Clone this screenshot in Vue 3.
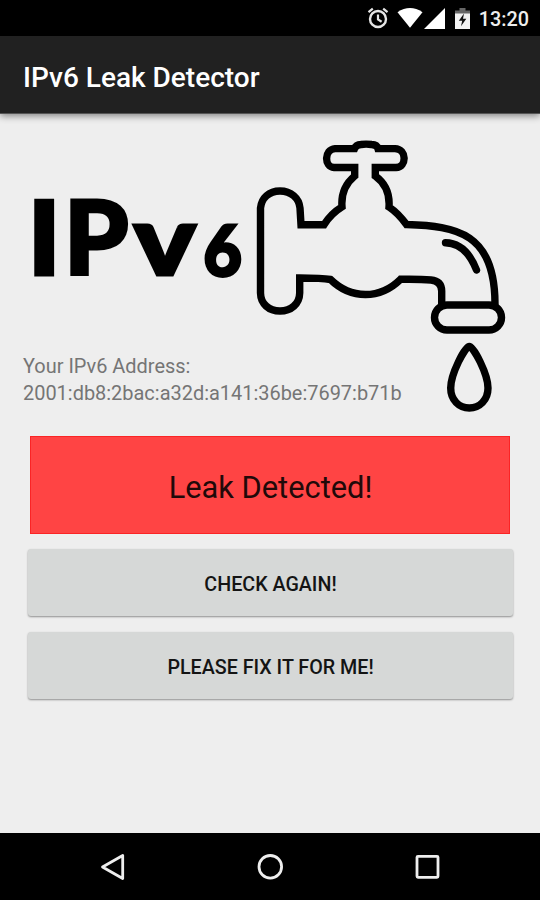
<script setup>
import { ref } from 'vue'

const time = ref('13:20')
const address = ref('2001:db8:2bac:a32d:a141:36be:7697:b71b')
const leak = ref(true)
</script>

<template>
  <div class="screen">
    <div class="status-bar">
      <svg class="alarm" viewBox="0 0 22 22" width="22" height="22">
        <circle cx="11" cy="12" r="8" fill="none" stroke="#e6e6e6" stroke-width="2.4" />
        <path d="M11 7.5v5l3.6 2.3M1.5 5.2l4.3-3.5M20.5 5.2l-4.3-3.5" fill="none" stroke="#e6e6e6" stroke-width="2.2" />
      </svg>
      <svg class="wifi" viewBox="0 0 26 20" width="26" height="20">
        <path d="M0.5 4.2Q13-4 25.5 4.2L13 19.7z" fill="#fff" />
      </svg>
      <svg class="signal" viewBox="0 0 21 21" width="21" height="21">
        <path d="M0 21L21 0V21z" fill="#fff" />
      </svg>
      <svg class="battery" viewBox="0 0 15 21" width="15" height="21">
        <path d="M4.5 0h6v2.5H15V6H0V2.5h4.5z" fill="#666" />
        <path d="M0 5.5h15V21H0z" fill="#f2f2f2" />
        <path d="M9 5.5L3.8 12.8h3.4L6 18.2l5.3-7.4H8z" fill="#111" />
      </svg>
      <span class="time">{{ time }}</span>
    </div>

    <header>
      <h1>IPv6 Leak Detector</h1>
    </header>

    <main>
      <div class="hero">
        <svg class="logo" viewBox="0 114 540 306" width="540" height="306">
          <g class="logo-text">
            <text transform="translate(27.5 275.3) scale(1.07 1)" font-size="103">I</text>
            <text transform="translate(64 275.3)" font-size="103">P</text>
            <text transform="translate(133.7 275) scale(1.19 1)" font-size="98">v</text>
            <text transform="translate(203.5 276) scale(0.93 1)" font-size="71">6</text>
          </g>
          <g class="tap">
            <!-- body, handle and flange -->
            <path
              d="M441.7 304V291Q441.5 281 431 280Q420 279 400.5 279.3C380 299.5 351 299.5 330.5 279.5Q322 278 299.7 278V293C299.5 304 291 311 280 311S260.7 304 260.5 293V208C261.5 198 269 191 280 191S299 198 300 208L301 224.7H324Q331 213.5 342 206.8C341 194 345 184 354.7 176V167.5H334C324 167 324 149.5 335 148.6H354.5Q356 144.7 361 144.5Q366 143.7 371.5 144.5Q377 144.7 378 148.6H395C407 149 407 167 396 167.5H375.3V176C385 183 390 193 389 207Q398 213 406.5 224.5C457 226 495 233 495 304"
            />
            <rect x="434.5" y="305" width="67" height="25" rx="12.5" />
            <!-- highlight -->
            <path d="M445.5 242.7Q466 243 476.5 270" />
            <!-- drop -->
            <path d="M469.3 346.5C465 346.5 450.7 374 450.7 388C450.7 400 459 408 469.3 408S488 400 488 388C488 374 473.5 346.5 469.3 346.5z" />
          </g>
        </svg>
        <p class="address">Your IPv6 Address:<br />{{ address }}</p>
      </div>

      <div v-if="leak" class="result">Leak Detected!</div>

      <button class="check">CHECK AGAIN!</button>
      <button class="fix">PLEASE FIX IT FOR ME!</button>
    </main>

    <nav>
      <svg viewBox="0 0 30 30" width="30" height="30">
        <path d="M4.5 15L24.7 3.5V26.5z" />
      </svg>
      <svg viewBox="0 0 30 30" width="30" height="30">
        <circle cx="15.3" cy="14.8" r="11.3" />
      </svg>
      <svg viewBox="0 0 30 30" width="30" height="30">
        <rect x="5" y="4.3" width="21" height="21" rx="1" />
      </svg>
    </nav>
  </div>
</template>

<style>
body {
  background: #eee;
}
</style>

<style scoped>
.screen {
  display: flex;
  flex-direction: column;
  width: 540px;
  height: 900px;
  background: #eee;
  font-family: Roboto, sans-serif;
  overflow: hidden;
}

.status-bar {
  display: flex;
  justify-content: flex-end;
  align-items: center;
  height: 36px;
  padding-right: 11px;
  background: #000;
}

.wifi {
  margin-left: 8px;
}

.signal {
  margin-left: 1px;
}

.battery {
  margin-left: 10px;
}

.time {
  margin-left: 9px;
  padding-top: 3px;
  color: #eee;
  font-size: 19.8px;
  font-weight: 500;
  line-height: 36px;
}

header {
  display: flex;
  align-items: center;
  box-sizing: border-box;
  height: 78px;
  padding: 5px 0 0 23px;
  background: #212121;
  border-bottom: 1px solid #555;
  box-shadow: 0 2px 7px rgba(0, 0, 0, 0.45);
  z-index: 1;
}

h1 {
  margin: 0;
  color: #fff;
  font-size: 28px;
  font-weight: 500;
}

main {
  flex: 1;
  display: flex;
  flex-direction: column;
}

/* the drop hangs down beside the address, so both share one cell */
.hero {
  display: grid;
  height: 322px;
}

.logo,
.address {
  grid-area: 1 / 1;
}

.logo-text {
  fill: #000;
  stroke: #000;
  stroke-width: 3;
  font-family: Lato, sans-serif;
  font-weight: 900;
}

.tap {
  fill: none;
  stroke: #000;
  stroke-width: 7.4;
  stroke-linecap: round;
}

.address {
  align-self: end;
  margin: 0 0 29px 23px;
  color: #757575;
  font-size: 19.95px;
  line-height: 27px;
}

.result {
  display: flex;
  justify-content: center;
  align-items: center;
  box-sizing: border-box;
  height: 98px;
  margin: 0 30px;
  padding: 4px 0 0 1px;
  border: 1px solid #fb2425;
  background: #ff4444;
  color: #210909;
  font-size: 30.8px;
}

button {
  height: 67px;
  margin: 0 27px 0 28px;
  padding: 3px 0 0;
  border: none;
  border-radius: 3px;
  background: #d6d8d7;
  box-shadow: 0 1px 2px rgba(0, 0, 0, 0.4);
  color: #141414;
  font-family: Roboto, sans-serif;
  font-size: 19.7px;
  font-weight: 500;
}

.check {
  margin-top: 15px;
}

.fix {
  margin-top: 16px;
}

nav {
  display: flex;
  justify-content: center;
  align-items: center;
  gap: 127px;
  height: 67px;
  background: #000;
}

nav svg {
  fill: none;
  stroke: #eee;
  stroke-width: 2.8;
  stroke-linejoin: round;
}
</style>
